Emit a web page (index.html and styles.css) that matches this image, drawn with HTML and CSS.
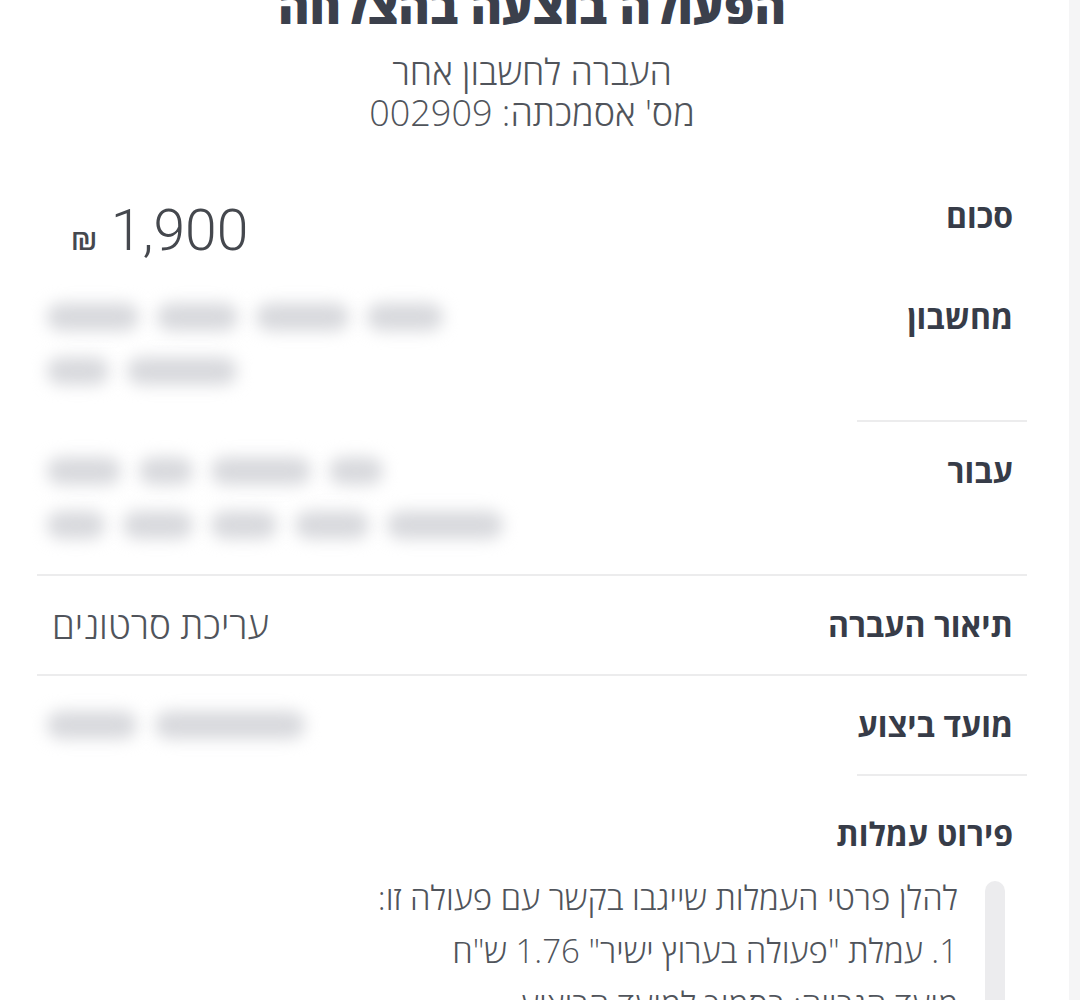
FILE: index.html
```html
<!DOCTYPE html>
<html lang="he" dir="rtl">
<head>
    <meta charset="UTF-8">
    <meta name="viewport" content="width=device-width, initial-scale=1.0">
    <title>הפעולה בוצעה בהצלחה</title>

    <link rel="stylesheet" href="styles.css">

</head>
<body>
    <div class="page">
        <div class="header">
            <h1 class="title">הפעולה בוצעה בהצלחה</h1>
            <p class="subtitle">העברה לחשבון אחר<br>מס' אסמכתה: 002909</p>
        </div>

        <div class="details">
            <div class="row row-amount">
                <div class="label">סכום</div>
                <div class="value amount"><span class="num">1,900</span> <span class="cur">₪</span></div>
            </div>

            <!-- פרטים מוסתרים -->
            <div class="row row-hidden">
                <div class="label">מחשבון</div>
                <div class="value value-blur no-line" aria-hidden="true">
                    <div class="blur-line">
                        <span class="blot p76"></span>
                        <span class="blot p93"></span>
                        <span class="blot p81"></span>
                        <span class="blot p92"></span>
                    </div>
                    <div class="blur-line">
                        <span class="blot p110"></span>
                        <span class="blot p62"></span>
                    </div>
                </div>
            </div>

            <div class="row row-hidden">
                <div class="label">עבור</div>
                <div class="value value-blur" aria-hidden="true">
                    <div class="blur-line">
                        <span class="blot p54"></span>
                        <span class="blot p100"></span>
                        <span class="blot p54"></span>
                        <span class="blot p74"></span>
                    </div>
                    <div class="blur-line">
                        <span class="blot p116"></span>
                        <span class="blot p74"></span>
                        <span class="blot p66"></span>
                        <span class="blot p70"></span>
                        <span class="blot p58"></span>
                    </div>
                </div>
            </div>

            <div class="row">
                <div class="label">תיאור העברה</div>
                <div class="value">עריכת סרטונים</div>
            </div>

            <div class="row">
                <div class="label">מועד ביצוע</div>
                <div class="value value-blur no-line" aria-hidden="true">
                    <div class="blur-line">
                        <span class="blot p150"></span>
                        <span class="blot p90"></span>
                    </div>
                </div>
            </div>
        </div>

        <div class="fees">
            <div class="fees-title">פירוט עמלות</div>
            <div class="fees-box">
                <div class="scroll-track"></div>
                <div class="fees-text">
                    <p>להלן פרטי העמלות שייגבו בקשר עם פעולה זו:</p>
                    <p>1. עמלת "פעולה בערוץ ישיר" 1.76 ש"ח</p>
                    <p>מועד הגבייה: בסמוך למועד הביצוע</p>
                </div>
            </div>
        </div>
    </div>
</body>
</html>
```

FILE: styles.css
```css
body {
    margin: 0;
    background-color: #fff;
    font-family: "Open Sans", "Liberation Sans", sans-serif;
    color: #3a3f4b;
    overflow: hidden;
}
.page {
    height: 1000px;
    overflow: hidden;
    border-right: 11px solid #f5f5f6;
    padding: 0 42px 0 37px;
}

/* כותרת */
.title {
    margin: -18px 0 0;
    font-size: 48px;
    line-height: 48px;
    font-weight: 800;
    text-align: center;
    color: #3b404c;
}
.subtitle {
    margin: 21px 0 0;
    font-size: 36px;
    line-height: 41px;
    font-weight: 300;
    text-align: center;
    color: #50545b;
}

/* שורות פרטים */
.details {
    margin-top: 33px;
}
.row {
    display: grid;
    grid-template-columns: 170px 1fr;
}
.label {
    padding: 22px 14px 22px 0;
    font-size: 32px;
    line-height: 54px;
    font-weight: 700;
    white-space: nowrap;
    color: #373c48;
    border-bottom: 2px solid #ececed;
}
.value {
    padding: 22px 0 22px 15px;
    text-align: left;
    font-size: 37px;
    line-height: 54px;
    font-weight: 300;
    color: #50545b;
    border-bottom: 2px solid #ececed;
}
.row-amount .label,
.row-amount .value {
    border-bottom: none;
}
.row-amount .label {
    padding: 23px 14px 24px 0;
}
.value.no-line {
    border-bottom-color: transparent;
}
.amount {
    padding: 35px 0 0 34px;
    line-height: 60px;
    color: #45484e;
}
.amount .num {
    font-family: Roboto, "Liberation Sans", sans-serif;
    font-size: 57px;
    font-weight: 300;
    margin-left: 4px;
}
.amount .cur {
    font-family: Roboto, "DejaVu Sans", sans-serif;
    font-size: 34px;
    font-weight: 400;
}

/* טשטוש */
.value-blur {
    padding-left: 10px;
}
.blur-line {
    display: flex;
    justify-content: flex-end;
    align-items: center;
    gap: 18px;
    height: 54px;
}
.blot {
    height: 28px;
    border-radius: 14px;
    background-color: #d8d9dd;
    filter: blur(8px);
}
.p54 { width: 54px; }
.p58 { width: 58px; }
.p62 { width: 62px; }
.p66 { width: 66px; }
.p70 { width: 70px; }
.p74 { width: 74px; }
.p76 { width: 76px; }
.p81 { width: 81px; }
.p90 { width: 90px; }
.p92 { width: 92px; }
.p93 { width: 93px; }
.p100 { width: 100px; }
.p110 { width: 110px; }
.p116 { width: 116px; }
.p150 { width: 150px; }

/* עמלות */
.fees-title {
    padding: 31px 14px 0 0;
    font-size: 32px;
    line-height: 54px;
    font-weight: 700;
    color: #373c48;
}
.fees-box {
    display: flex;
    gap: 27px;
    margin-top: 10px;
    padding-right: 22px;
}
.scroll-track {
    flex: none;
    width: 20px;
    height: 200px;
    margin-top: 10px;
    background-color: #ececee;
    border-radius: 10px 10px 0 0;
}
.fees-text p {
    margin: 0;
    font-size: 33px;
    line-height: 53px;
    font-weight: 300;
    color: #50545b;
}
```
